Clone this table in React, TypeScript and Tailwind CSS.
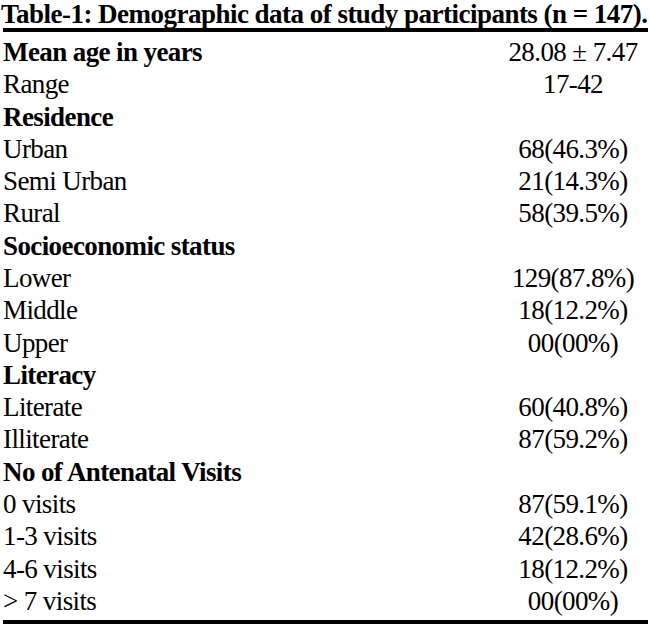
const rows: { label: string; value?: string; head?: boolean }[] = [
  { label: "Mean age in years", value: "28.08 ± 7.47", head: true },
  { label: "Range", value: "17-42" },
  { label: "Residence", head: true },
  { label: "Urban", value: "68(46.3%)" },
  { label: "Semi Urban", value: "21(14.3%)" },
  { label: "Rural", value: "58(39.5%)" },
  { label: "Socioeconomic status", head: true },
  { label: "Lower", value: "129(87.8%)" },
  { label: "Middle", value: "18(12.2%)" },
  { label: "Upper", value: "00(00%)" },
  { label: "Literacy", head: true },
  { label: "Literate", value: "60(40.8%)" },
  { label: "Illiterate", value: "87(59.2%)" },
  { label: "No of Antenatal Visits", head: true },
  { label: "0 visits", value: "87(59.1%)" },
  { label: "1-3 visits", value: "42(28.6%)" },
  { label: "4-6 visits", value: "18(12.2%)" },
  { label: "> 7 visits", value: "00(00%)" },
];

export default function App() {
  return (
    <div className="w-[650px] h-[633px] bg-white text-black font-['Liberation_Serif',serif] text-[27px] tracking-[-0.6px]">
      <h1 className="font-bold leading-[28px] pl-[1px] whitespace-nowrap tracking-[-0.52px]">
        Table-1: Demographic data of study participants (n = 147).
      </h1>
      <div className="ml-[3px] mr-[2px] border-t-[4px] border-b-[4px] border-black pt-[4px] pb-[3px]">
        {rows.map((r) => (
          <div key={r.label} className="flex items-center h-[32.3px]">
            <div className={`flex-1 whitespace-nowrap ${r.head ? "font-bold" : ""}`}>{r.label}</div>
            <div className="w-[150px] text-center whitespace-nowrap">{r.value ?? ""}</div>
          </div>
        ))}
      </div>
    </div>
  );
}
